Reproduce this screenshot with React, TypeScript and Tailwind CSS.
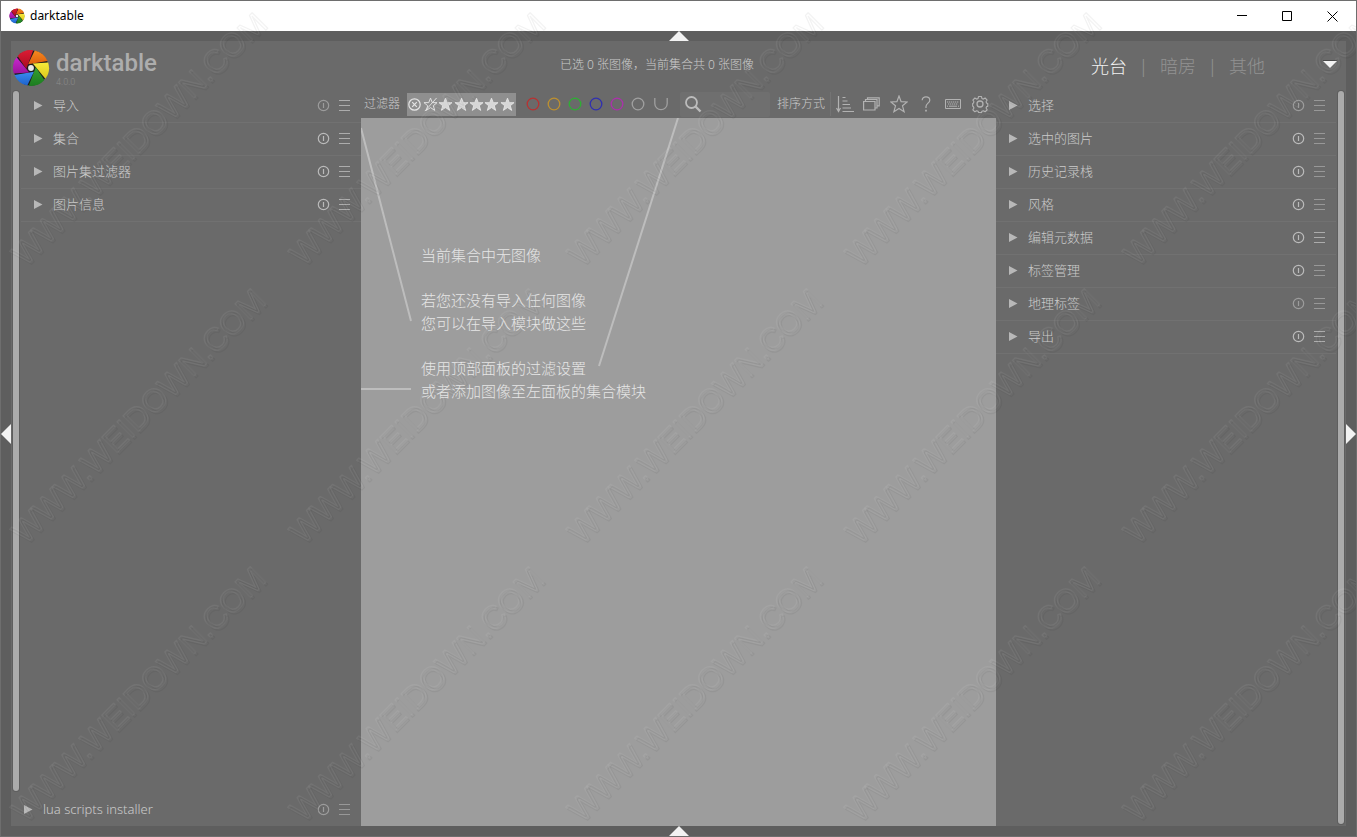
import React, { useState } from "react";

interface Module {
  name: string;
  resetDim?: boolean;
  menuDim?: boolean;
}

const leftModules: Module[] = [
  { name: "导入", resetDim: true },
  { name: "集合" },
  { name: "图片集过滤器" },
  { name: "图片信息" },
];

const rightModules: Module[] = [
  { name: "选择", resetDim: true, menuDim: true },
  { name: "选中的图片", menuDim: true },
  { name: "历史记录栈", menuDim: true },
  { name: "风格", menuDim: true },
  { name: "编辑元数据" },
  { name: "标签管理", menuDim: true },
  { name: "地理标签", resetDim: true, menuDim: true },
  { name: "导出" },
];

const colorLabels = [
  { name: "red", color: "#b83232" },
  { name: "yellow", color: "#bd9030" },
  { name: "green", color: "#2fae35" },
  { name: "blue", color: "#3030b0" },
  { name: "purple", color: "#ac30ac" },
  { name: "grey", color: "#a0a0a0" },
];

const blades = [
  { angle: -22, light: "#f58a20", dark: "#e0600c" },
  { angle: 38, light: "#f8ec3a", dark: "#dcc81c" },
  { angle: 98, light: "#36a030", dark: "#1c7c20" },
  { angle: 158, light: "#3a8cf0", dark: "#1c62cc" },
  { angle: 218, light: "#c828d0", dark: "#9c149c" },
  { angle: 278, light: "#dc1c34", dark: "#a80c20" },
];

const STAR = "M8 1.2 9.9 6H15l-4 3.3 1.5 5L8 11.3l-4.5 3 1.5-5L1 6h5.1z";

// point on a circle of radius r, angle in degrees
const polar = (r: number, deg: number) => {
  const a = (deg * Math.PI) / 180;
  return `${(20 + r * Math.cos(a)).toFixed(2)} ${(20 + r * Math.sin(a)).toFixed(2)}`;
};

const Logo = ({ id, className }: { id: string; className: string }) => (
  <svg viewBox="1 1 38 38" className={className} aria-hidden="true">
    <defs>
      {blades.map((b) => (
        <linearGradient key={b.angle} id={`${id}${b.angle}`} x1="0" y1="0" x2="0" y2="1">
          <stop offset="0" stopColor={b.light} />
          <stop offset="1" stopColor={b.dark} />
        </linearGradient>
      ))}
    </defs>
    <circle cx="20" cy="20" r="17.5" fill="#1c1c1c" />
    {blades.map((b) => (
      <path
        key={b.angle}
        d={`M${polar(18, b.angle - 56)}A18 18 0 0 1 ${polar(18, b.angle - 1)}L${polar(4.8, b.angle - 106)}Z`}
        fill={`url(#${id}${b.angle})`}
      />
    ))}
    <circle cx="20" cy="20" r="2.9" fill="#e8e8e8" />
  </svg>
);

const ResetIcon = () => (
  <svg width="13" height="13" viewBox="0 0 13 13" fill="none" stroke="currentColor">
    <circle cx="6.5" cy="6.5" r="5.2" strokeWidth="1.2" />
    <path d="M6.5 4v5" strokeWidth="1.2" />
  </svg>
);

const MenuIcon = () => (
  <svg width="11" height="11" viewBox="0 0 11 11" fill="none" stroke="currentColor">
    <path d="M0 .5h11M0 5.5h11M0 10.5h11" />
  </svg>
);

const Expander = () => (
  <svg width="9" height="9" viewBox="0 0 9 9" className="fill-[#b8b8b8]">
    <path d="M0 0v9L8.5 4.5z" />
  </svg>
);

const ModuleRow = ({ module }: { module: Module }) => (
  <div className="flex h-8 items-center pb-[2px] pl-[13px] pr-[6px]">
    <button className="flex flex-1 items-center gap-[10px] text-left text-[13px] leading-5 text-[#cacaca]">
      <Expander />
      {module.name}
    </button>
    <button
      aria-label={`重置 ${module.name}`}
      className={`flex h-5 w-[21px] items-center justify-center ${module.resetDim ? "text-[#9c9c9c]" : "text-[#bababa]"}`}
    >
      <ResetIcon />
    </button>
    <button
      aria-label={`预设 ${module.name}`}
      className={`flex h-5 w-[21px] items-center justify-center ${module.menuDim ? "text-[#989898]" : "text-[#acacac]"}`}
    >
      <MenuIcon />
    </button>
  </div>
);

const ModuleList = ({ modules }: { modules: Module[] }) => (
  <ul className="flex-1">
    {modules.map((m) => (
      <li key={m.name} className="border-b border-[#717171]">
        <ModuleRow module={m} />
      </li>
    ))}
  </ul>
);

const Scrollbar = ({ className }: { className: string }) => (
  <div className={`w-[6px] rounded-full bg-[#ababab] ring-1 ring-[#5e5e5e] ${className}`} />
);

const PanelToggle = ({ label, size, path }: { label: string; size: string; path: string }) => (
  <button aria-label={label} className="flex items-center justify-center">
    <svg className={`fill-[#f2f2f2] ${size}`} viewBox={size.startsWith("h-5") ? "0 0 10 20" : "0 0 20 10"}>
      <path d={path} />
    </svg>
  </button>
);

const TitleBar = () => (
  <div className="flex h-[30px] items-center bg-white pl-2 text-black">
    <Logo id="icon" className="h-4 w-4" />
    <span className="ml-[5px] flex-1 text-[12px] leading-4 font-normal">darktable</span>
    <button aria-label="最小化" className="flex h-full w-[45px] items-center justify-center">
      <svg width="10" height="10" viewBox="0 0 10 10" stroke="currentColor">
        <path d="M0 4.5h10" />
      </svg>
    </button>
    <button aria-label="最大化" className="flex h-full w-[45px] items-center justify-center">
      <svg width="10" height="10" viewBox="0 0 10 10" stroke="currentColor" fill="none">
        <path d="M.5.5h9v9h-9z" />
      </svg>
    </button>
    <button aria-label="关闭" className="flex h-full w-[47px] items-center justify-center">
      <svg width="11" height="11" viewBox="0 0 11 11" stroke="currentColor">
        <path d="M.5.5l10 10M10.5.5l-10 10" />
      </svg>
    </button>
  </div>
);

const Header = ({ view, onView }: { view: string; onView: (v: string) => void }) => (
  <header className="flex h-[49px]">
    <div className="flex w-[350px] gap-[6px] pl-px pt-2 font-['Roboto',sans-serif]">
      <Logo id="logo" className="h-[38px] w-[38px]" />
      <div>
        <h1 className="text-[24px] leading-7 font-medium text-[#adadad]">darktable</h1>
        <p className="text-[9px] leading-[10px] text-[#8c8c8c]">4.0.0</p>
      </div>
    </div>
    <p className="flex-1 pt-[14px] text-center text-[12px] leading-5 whitespace-nowrap text-[#cacaca]">
      已选 0 张图像，当前集合共 0 张图像
    </p>
    <nav className="flex w-[393px] items-center justify-end pr-[9px] text-[18px] leading-6">
      {["光台", "暗房", "其他"].map((v, i) => (
        <React.Fragment key={v}>
          {i > 0 && <span className="w-[33px] text-center text-[#929292]">|</span>}
          <button onClick={() => onView(v)} className={view === v ? "text-[#f2f2f2]" : "text-[#929292]"}>
            {v}
          </button>
        </React.Fragment>
      ))}
      <button aria-label="更多视图" className="ml-[58px] pb-1">
        <svg width="14" height="8" viewBox="0 0 14 8">
          <path d="M0 0h14v1H0z" fill="#4a4a4a" />
          <path d="M0 1h14L7 8z" fill="#f2f2f2" />
        </svg>
      </button>
    </nav>
  </header>
);

const iconButton = "flex h-6 w-[27px] items-center justify-center";

const Toolbar = () => {
  const [search, setSearch] = useState("");

  return (
    <div className="flex h-7 items-center pl-[3px] text-[12px] leading-5 whitespace-nowrap text-[#cacaca]">
      <span className="w-9">过滤器</span>
      <div className="ml-[7px] flex h-[23px] w-[109px] items-center bg-[#8f8f8f] pr-px text-[#e4e4e4]">
        <button aria-label="拒绝" className="flex w-[15px] justify-center">
          <svg width="13" height="13" viewBox="0 0 13 13" fill="none" stroke="currentColor">
            <circle cx="6.5" cy="6.5" r="5.7" strokeWidth="1.2" />
            <path d="M4.2 4.2l4.6 4.6M8.8 4.2L4.2 8.8" strokeWidth="1.2" />
          </svg>
        </button>
        <button aria-label="未评级" className="flex w-4 justify-center">
          <svg width="15" height="15" viewBox="0 0 16 16" fill="none" stroke="currentColor">
            <path d={STAR} />
            <path d="M2 15L14.5 1" />
          </svg>
        </button>
        {[1, 2, 3, 4, 5].map((n) => (
          <button key={n} aria-label={`${n} 星`} className="flex flex-1 justify-center">
            <svg width="15" height="15" viewBox="0 0 16 16" fill="#d6d6d6" stroke="#ececec" strokeWidth=".8">
              <path d={STAR} />
            </svg>
          </button>
        ))}
      </div>

      <div className="ml-[6px] flex">
        {colorLabels.map((c) => (
          <button key={c.name} aria-label={c.name} className="flex w-[21px] justify-center">
            <svg width="14" height="14" viewBox="0 0 14 14" fill="none" stroke={c.color} strokeWidth="1.3">
              <circle cx="7" cy="7" r="5.8" />
            </svg>
          </button>
        ))}
        <button aria-label="并集" className="flex w-[25px] justify-center">
          <svg width="14" height="14" viewBox="0 0 14 14" fill="none" stroke="#a0a0a0" strokeWidth="1.3">
            <path d="M.8 1v5.500a6.200 6.200 0 0 0 12.400 0V1" />
          </svg>
        </button>
      </div>

      <label className="ml-[7px] flex h-[25px] w-[90px] items-center rounded-xs bg-[#6f6f6f] pl-1">
        <svg width="18" height="18" viewBox="0 0 18 18" fill="none" stroke="#bcbcbc" strokeWidth="1.8" className="shrink-0">
          <circle cx="7.5" cy="7.5" r="5.5" />
          <path d="M11.5 11.5l5 5" strokeWidth="2.4" />
        </svg>
        <input
          aria-label="搜索"
          value={search}
          onChange={(e) => setSearch(e.target.value)}
          className="w-full min-w-0 bg-transparent pl-1 outline-none"
        />
      </label>

      <span className="ml-[7px] w-12">排序方式</span>
      <div className="ml-[5px] flex border-l border-[#747474] text-[#b2b2b2]">
        <button aria-label="排序方向" className={iconButton}>
          <svg width="18" height="18" viewBox="0 0 18 18" fill="none" stroke="currentColor" strokeWidth="1.2">
            <path d="M2.5 1v15M.5 13l2 3.5 2-3.5" />
            <path d="M6.5 2.5h3M6.5 6h5M6.5 9.5h7.5M6.5 13h8.5M6.5 16.5H18" />
          </svg>
        </button>
        <button aria-label="分组" className={iconButton}>
          <svg width="17" height="14" viewBox="0 0 17 14" fill="none" stroke="currentColor" strokeWidth="1.2">
            <path d="M.6 4.5h11.4v8.5H.6z" />
            <path d="M2.5 4.5v-2h11.5v8.5h-2M4.5 2.5V.8h11.7v8h-2.2" />
          </svg>
        </button>
        <button aria-label="叠加信息" className={iconButton}>
          <svg width="18" height="18" viewBox="0 0 18 18" fill="none" stroke="currentColor" strokeWidth="1.2">
            <path d="M9 1l2.1 5.7 6.1.3-4.7 3.8 1.6 5.9L9 13.4l-5.1 3.3 1.6-5.9L.8 7l6.1-.3z" />
          </svg>
        </button>
        <button aria-label="帮助" className={iconButton}>
          <svg width="10" height="16" viewBox="0 0 10 16" fill="none" stroke="currentColor" strokeWidth="1.2">
            <path d="M1.2 4.3C1.2 2 2.8.8 5 .8s3.8 1.3 3.8 3.4C8.8 7 5 7.3 5 10.5V12" />
            <path d="M5 13.7V15.4" strokeWidth="1.7" />
          </svg>
        </button>
        <button aria-label="快捷键" className={iconButton}>
          <svg width="16" height="10" viewBox="0 0 16 10" fill="none" stroke="currentColor">
            <path d="M.5.5h15v9H.5z" />
            <path d="M2 3h12M3 5h10" strokeDasharray="1.3 .7" />
            <path d="M2 7.2h1M4 7.2h8M13 7.2h1" />
          </svg>
        </button>
        <button aria-label="首选项" className={iconButton}>
          <svg width="18" height="18" viewBox="0 0 24 24" fill="none" stroke="currentColor" strokeWidth="1.7" strokeLinejoin="round">
            <path d="M9.9 1.5h4.2l.7 3 2.2.9 2.6-1.600 3 3-1.600 2.600.9 2.200.6 0v0l0 0 1 .3v4.200l-1.600.3-.9 2.200 1.600 2.600-3 3-2.600-1.600-2.200.9-.7 1.900H9.900l-.7-1.900-2.200-.9-2.600 1.600-3-3 1.600-2.600-.9-2.200-1-.3v-4.200l1-.3.9-2.200-1.600-2.600 3-3L7 5.400l2.200-.9z" transform="translate(1.200 .6) scale(.9)" />
            <circle cx="12" cy="12" r="4" />
          </svg>
        </button>
      </div>
    </div>
  );
};

const EmptyLighttable = () => (
  <section className="relative flex-1 bg-[#9d9d9d] pl-[60px] pt-[126px] text-[15px] leading-[23px] text-[#e6e6e6]">
    {/* hint lines pointing at the import module, collection module and filters */}
    <svg className="absolute left-0 top-0" width="330" height="290" fill="none" stroke="#bdbdbd" strokeWidth="2">
      <path d="M0 10L50 203M0 271h50M317 0L238 248" />
    </svg>
    <p>当前集合中无图像</p>
    <p className="mt-[22px]">
      若您还没有导入任何图像
      <br />
      您可以在导入模块做这些
    </p>
    <p className="mt-[22px]">
      使用顶部面板的过滤设置
      <br />
      或者添加图像至左面板的集合模块
    </p>
  </section>
);

const Watermark = () => (
  <svg className="pointer-events-none absolute inset-0 h-full w-full" aria-hidden="true">
    <defs>
      <pattern id="watermark" width="278" height="278" patternUnits="userSpaceOnUse">
        <g fill="none" fontFamily="Liberation Sans, sans-serif" fontSize="32" strokeLinejoin="round">
          <text transform="translate(26 268) rotate(-45)" stroke="#000" strokeOpacity=".05" strokeWidth="1.2">
            WWW.WEIDOWN.COM
          </text>
          <text transform="translate(24 266) rotate(-45)" stroke="#fff" strokeOpacity=".06" strokeWidth="1.2">
            WWW.WEIDOWN.COM
          </text>
        </g>
      </pattern>
    </defs>
    <rect width="100%" height="100%" fill="url(#watermark)" />
  </svg>
);

const App: React.FC = () => {
  const [view, setView] = useState("光台");

  return (
    <div
      lang="zh-CN"
      className="relative flex min-h-screen flex-col border border-[#6e6e6e] bg-[#5e5e5e] font-['Noto_Sans','Noto_Sans_CJK_SC',sans-serif] font-light"
    >
      <TitleBar />
      <div className="flex h-[10px] justify-center">
        <PanelToggle label="顶部面板" size="h-[10px] w-5" path="M0 10L10 0l10 10z" />
      </div>

      <div className="flex flex-1">
        <PanelToggle label="左侧面板" size="h-5 w-[10px]" path="M10 0v20L0 10z" />
        <div className="flex min-w-0 flex-1 flex-col bg-[#6a6a6a]">
          <Header view={view} onView={setView} />
          <div className="flex flex-1">
            <aside className="flex w-[350px] flex-col">
              <div className="flex flex-1 gap-[2px] pl-[2px]">
                <Scrollbar className="mt-px" />
                <ModuleList modules={leftModules} />
              </div>
              <div className="pt-[3px]">
                <ModuleRow module={{ name: "lua scripts installer", resetDim: true, menuDim: true }} />
              </div>
            </aside>
            <main className="flex min-w-0 flex-1 flex-col">
              <Toolbar />
              <EmptyLighttable />
            </main>
            <aside className="flex w-[350px] gap-[2px] pr-[2px]">
              <ModuleList modules={rightModules} />
              <Scrollbar className="mt-px mb-[2px]" />
            </aside>
          </div>
        </div>
        <PanelToggle label="右侧面板" size="h-5 w-[10px]" path="M0 0v20l10-10z" />
      </div>

      <div className="flex h-[10px] justify-center">
        <PanelToggle label="底部面板" size="h-[10px] w-5" path="M0 10L10 0l10 10z" />
      </div>
      <Watermark />
    </div>
  );
};

export default App;
